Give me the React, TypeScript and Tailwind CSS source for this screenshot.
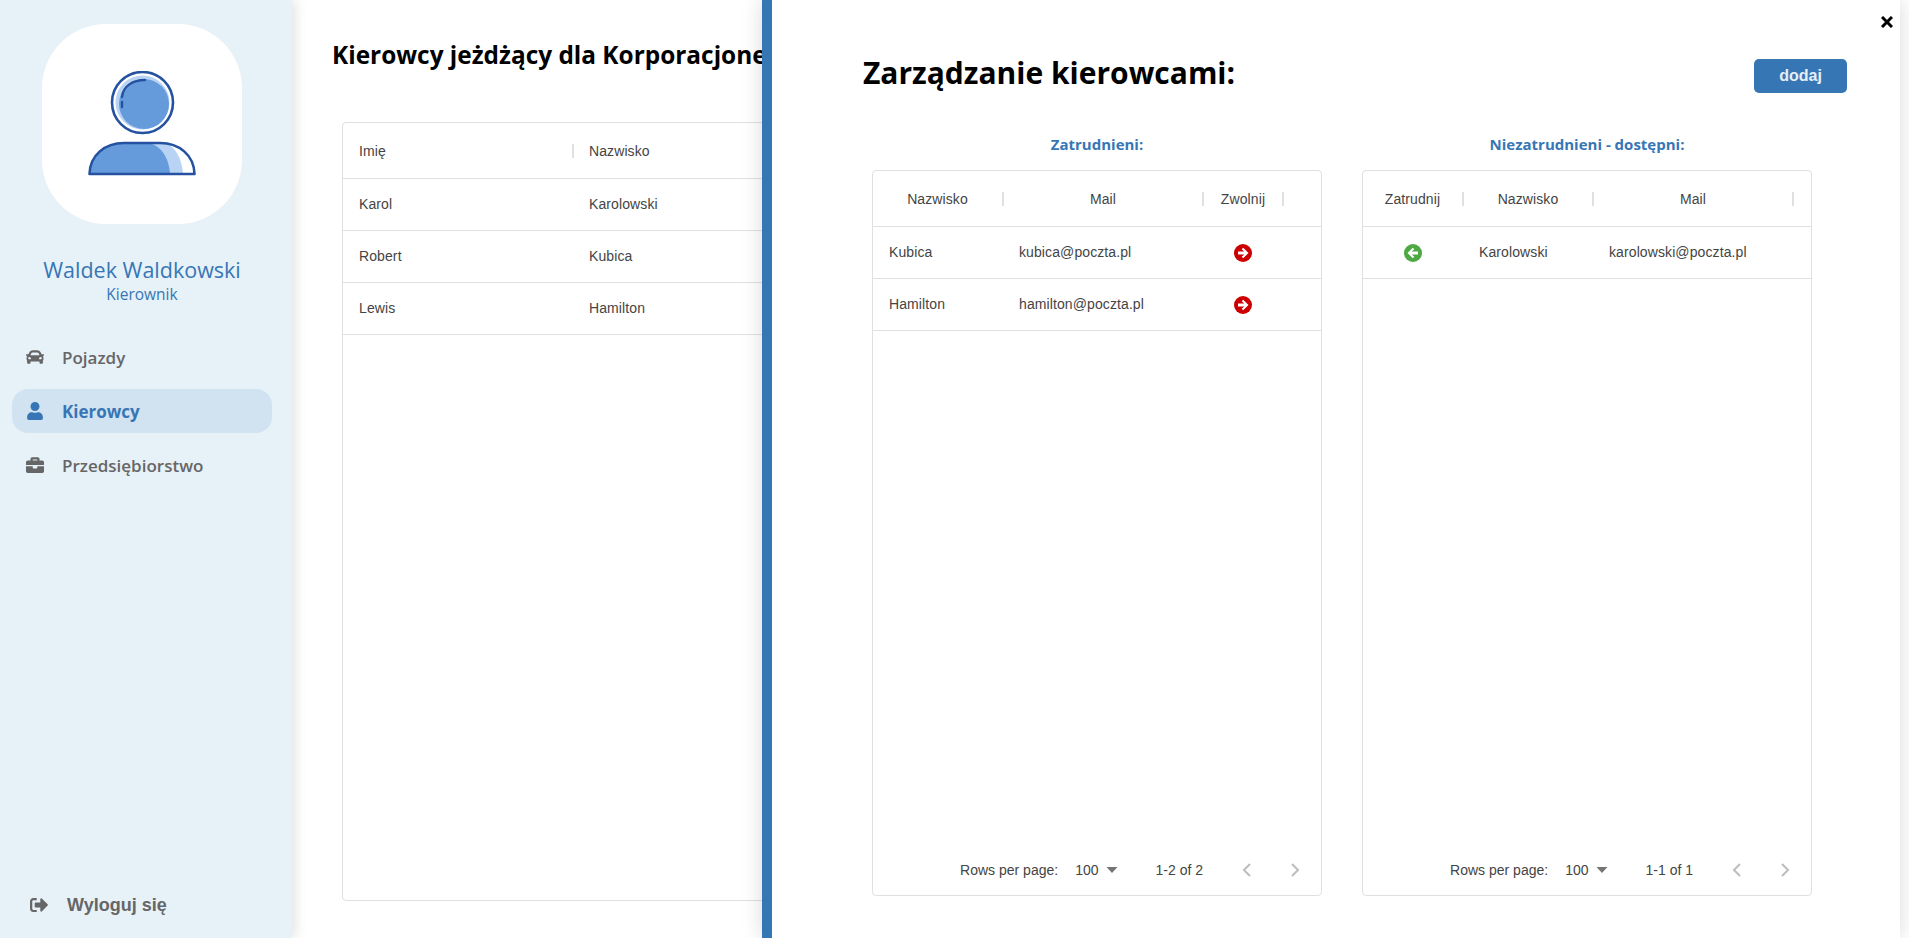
import React from "react";

const seg = "font-['Open_Sans','Noto_Sans',sans-serif]";

function Avatar() {
  return (
    <svg width="108" height="105" viewBox="0 0 108 105" fill="none">
      <circle cx="54.500" cy="31.500" r="30.500" fill="#fff" stroke="#2552a0" strokeWidth="2.600" />
      <circle cx="54.500" cy="31.500" r="27" fill="#b9d3f4" />
      <circle cx="56" cy="33" r="25" fill="#659bdb" />
      <path d="M34 36 V31 M34 26 C35 15 45 9 57 9" stroke="#2552a0" strokeWidth="2.400" strokeLinecap="round" />
      <path d="M1.500 103 C2 84 17 72 36 72 H72 C91 72 106 84 106.500 103 Z" fill="#fff" />
      <path d="M1.500 103 C2 84 17 72 36 72 H77 C88 76 94 88 95 103 Z" fill="#b9d3f4" />
      <path d="M1.500 103 C2 84 17 72 36 72 H60 C73 74 81 87 82 103 Z" fill="#659bdb" />
      <path d="M1.500 103 C2 84 17 72 36 72 H72 C91 72 106 84 106.500 103 Z" stroke="#2552a0" strokeWidth="2.600" strokeLinejoin="round" />
    </svg>
  );
}

function CarIcon() {
  return (
    <svg width="18" height="14" viewBox="0 0 512 384" fill="currentColor">
      <path d="M499.99 112h-59.87l-16.64-41.6C406.38 27.61 365.57 0 319.48 0H192.52c-46.08 0-86.9 27.61-104.01 70.4L71.87 112H12.01C4.2 112-1.53 119.34.37 126.91l6 24C7.7 156.25 12.5 160 18.01 160h20.07C24.65 171.73 16 188.78 16 208v48c0 16.12 6.16 30.67 16 41.93V352c0 17.67 14.33 32 32 32h32c17.67 0 32-14.33 32-32v-32h256v32c0 17.67 14.33 32 32 32h32c17.67 0 32-14.33 32-32v-54.07c9.84-11.25 16-25.8 16-41.93v-48c0-19.22-8.65-36.27-22.07-48h20.07c5.51 0 10.31-3.75 11.64-9.09l6-24c1.89-7.57-3.84-14.91-11.65-14.91zM147.92 94.17C155.21 75.95 172.86 64 192.52 64h126.96c19.66 0 37.31 11.95 44.6 30.17L384 144H128l19.92-49.83zM96 255.88c-19.2 0-32-12.76-32-31.88s12.8-31.88 32-31.88 48 28.69 48 47.81-28.8 15.95-48 15.95zm320 0c-19.2 0-48 3.19-48-15.94s28.8-47.81 48-47.81 32 12.75 32 31.87-12.8 31.88-32 31.88z" />
    </svg>
  );
}

function UserIcon() {
  return (
    <svg width="16" height="18" viewBox="0 0 448 512" fill="currentColor">
      <path d="M224 256c70.7 0 128-57.3 128-128S294.7 0 224 0 96 57.3 96 128s57.3 128 128 128zm89.6 32h-16.7c-22.2 10.2-46.9 16-72.9 16s-50.6-5.8-72.9-16h-16.7C60.2 288 0 348.2 0 422.4V464c0 26.5 21.5 48 48 48h352c26.5 0 48-21.5 48-48v-41.6c0-74.2-60.2-134.4-134.4-134.4z" />
    </svg>
  );
}

function BriefcaseIcon() {
  return (
    <svg width="18" height="16" viewBox="0 0 512 448" fill="currentColor">
      <path d="M320 304c0 8.84-7.16 16-16 16h-96c-8.84 0-16-7.16-16-16v-48H0v144c0 25.6 22.4 48 48 48h416c25.6 0 48-22.4 48-48V256H320v48zM464 96h-80V48c0-25.6-22.4-48-48-48H176c-25.6 0-48 22.4-48 48v48H48C22.4 96 0 118.4 0 144v80h512v-80c0-25.6-22.4-48-48-48zm-144 0H192V64h128v32z" />
    </svg>
  );
}

function SignOutIcon() {
  return (
    <svg width="18" height="14" viewBox="0 0 512 400" fill="currentColor">
      <path d="M502.6 215.6l-168 168c-15 15-41 4.500-41-17v-96h-136c-13.300 0-24-10.700-24-24v-96c0-13.300 10.700-24 24-24h136v-96c0-21.400 25.900-32 41-17l168 168c9.300 9.400 9.300 24.600 0 34zM192 392v-40c0-6.600-5.400-12-12-12H96c-17.700 0-32-14.300-32-32V96c0-17.700 14.300-32 32-32h84c6.600 0 12-5.400 12-12V12c0-6.600-5.400-12-12-12H96C43 0 0 43 0 96v208c0 53 43 96 96 96h84c6.600 0 12-5.400 12-12z" />
    </svg>
  );
}

function ArrowCircle({ dir, color }: { dir: "left" | "right"; color: string }) {
  return (
    <svg width="18" height="18" viewBox="0 0 18 18" className="block">
      <circle cx="9" cy="9" r="9" fill={color} />
      <g transform={dir === "left" ? "rotate(180 9 9)" : undefined}>
        <path d="M9.200 3.700 L14.500 9 L9.200 14.300 L7.700 12.800 L10.300 10.400 H4 V7.600 H10.300 L7.700 5.200 Z" fill="#fff" />
      </g>
    </svg>
  );
}

function NavItem({ icon, label, active }: { icon: React.ReactNode; label: string; active?: boolean }) {
  return (
    <div
      className={`mx-3 flex h-11 w-[260px] items-center rounded-2xl pl-[12px] text-[17px] ${seg} ${
        active ? "bg-[#d1e3f1] font-bold text-[#3776b5]" : "font-semibold text-[#666666]"
      }`}
    >
      <span className="flex w-[22px] justify-center">{icon}</span>
      <span className="ml-[16px] leading-none">{label}</span>
    </div>
  );
}

function Sep() {
  return <span className="h-[14px] w-[2px] shrink-0 bg-[#e0e0e0]" />;
}

function HeadCell({ w, label, sep = true }: { w: number; label: string; sep?: boolean }) {
  return (
    <div className="flex h-full shrink-0 items-center" style={{ width: w }}>
      <span className="flex-1 text-center">{label}</span>
      {sep && <Sep />}
    </div>
  );
}

function Pagination({ range }: { range: string }) {
  return (
    <div className="mt-auto flex h-[52px] items-center justify-end pt-[2px] pr-[20px] text-[14px] tracking-normal text-[#444444]">
      <span>Rows per page:</span>
      <span className="ml-[17px]">100</span>
      <svg className="ml-[7px]" width="12" height="6" viewBox="0 0 12 6" fill="#757575">
        <path d="M0.500 0 H11.500 L6 6 Z" />
      </svg>
      <span className="ml-[38px]">{range}</span>
      <svg className="ml-[38px]" width="12" height="14" viewBox="0 0 12 14" fill="none" stroke="#bdbdbd" strokeWidth="2">
        <path d="M9 1 L3 7 L9 13" />
      </svg>
      <svg className="ml-[36px]" width="12" height="14" viewBox="0 0 12 14" fill="none" stroke="#bdbdbd" strokeWidth="2">
        <path d="M3 1 L9 7 L3 13" />
      </svg>
    </div>
  );
}

const firstRows = [
  ["Karol", "Karolowski"],
  ["Robert", "Kubica"],
  ["Lewis", "Hamilton"],
];

export default function App() {
  return (
    <div className="relative flex h-[938px] w-[1909px] overflow-hidden bg-white font-['Liberation_Sans',sans-serif]">
      <aside className="flex h-full w-[292px] shrink-0 flex-col bg-[#e6f1f8] shadow-[3px_0_12px_rgba(0,0,0,0.12)]">
        <div className="mt-6 ml-[42px] flex h-[200px] w-[200px] items-center justify-center rounded-[64px] bg-white pb-[1px]">
          <Avatar />
        </div>
        <div className={`mt-[32px] ml-[42px] w-[200px] whitespace-nowrap text-center text-[21.5px] leading-7 text-[#3776b5] ${seg}`}>Waldek Waldkowski</div>
        <div className={`ml-[42px] w-[200px] text-center text-[15.5px] leading-5 text-[#3776b5] ${seg}`}>Kierownik</div>
        <nav className="mt-[31px] flex flex-col gap-[10px]">
          <NavItem icon={<CarIcon />} label="Pojazdy" />
          <NavItem icon={<UserIcon />} label="Kierowcy" active />
          <NavItem icon={<BriefcaseIcon />} label="Przedsiębiorstwo" />
        </nav>
        <div className="mt-auto mb-[17px] flex h-8 items-center pl-[30px] text-[18px] font-bold text-[#666666]">
          <SignOutIcon />
          <span className="ml-[19px]">Wyloguj się</span>
        </div>
      </aside>

      <main className="min-w-0 flex-1 pl-[40px]">
        <h1 className={`mt-[37px] h-[36px] whitespace-nowrap text-[24.4px] font-bold leading-9 text-black ${seg}`}>
          Kierowcy jeżdżący dla Korporacjonex
        </h1>
        <div className="mt-[49px] ml-[10px] flex h-[779px] w-[900px] flex-col rounded-[4px] border border-[#e0e0e0] text-[14px] tracking-[0.1px] text-[#444444]">
          <div className="flex h-[56px] items-center border-b border-[#e0e0e0] pt-px">
            <div className="flex w-[231px] items-center justify-between pl-4">
              <span>Imię</span>
              <Sep />
            </div>
            <span className="pl-[15px]">Nazwisko</span>
          </div>
          {firstRows.map(([a, b]) => (
            <div key={a} className="flex h-[52px] items-center border-b border-[#e0e0e0]">
              <span className="w-[230px] pl-4">{a}</span>
              <span className="pl-[16px]">{b}</span>
            </div>
          ))}
        </div>
      </main>

      <section className="absolute top-0 bottom-0 left-[762px] flex w-[1138px] flex-col border-l-[10px] border-[#3776b5] bg-white pl-[91px] pr-[53px] shadow-[0_0_20px_rgba(0,0,0,0.15)]">
        <div className="absolute top-[16px] right-[7px] text-black">
          <svg width="12" height="12" viewBox="0 0 12 12" stroke="#000" strokeWidth="3" className="block">
            <path d="M1 1 L11 11 M11 1 L1 11" />
          </svg>
        </div>
        <div className="mt-[58px] flex items-start justify-between">
          <h2 className={`text-[30px] leading-[30px] font-bold text-black ${seg}`}>Zarządzanie kierowcami:</h2>
          <button className="mt-px h-[34px] w-[93px] rounded-[5px] bg-[#3776b5] text-[16px] font-bold text-[#e6eef6]">dodaj</button>
        </div>
        <div className="mt-[30px] flex gap-[40px] pl-[9px] pr-[28px]">
          <div className="flex w-[450px] flex-col">
            <div className={`h-[47px] pt-[11px] text-center text-[15px] leading-5 font-bold text-[#3776b5] ${seg}`}>Zatrudnieni:</div>
            <div className="flex h-[726px] flex-col rounded-[4px] border border-[#e0e0e0] text-[14px] tracking-[0.1px] text-[#444444]">
              <div className="flex h-[56px] shrink-0 items-center border-b border-[#e0e0e0] pt-px">
                <HeadCell w={131} label="Nazwisko" />
                <HeadCell w={200} label="Mail" />
                <HeadCell w={80} label="Zwolnij" />
              </div>
              {[["Kubica", "kubica@poczta.pl"], ["Hamilton", "hamilton@poczta.pl"]].map(([a, b]) => (
                <div key={a} className="flex h-[52px] shrink-0 items-center border-b border-[#e0e0e0]">
                  <span className="w-[130px] pl-4">{a}</span>
                  <span className="w-[200px] pl-4">{b}</span>
                  <span className="flex w-[80px] justify-center"><ArrowCircle dir="right" color="#cc0000" /></span>
                </div>
              ))}
              <Pagination range="1-2 of 2" />
            </div>
          </div>
          <div className="flex w-[450px] flex-col">
            <div className={`h-[47px] pt-[11px] text-center text-[15px] leading-5 font-bold text-[#3776b5] ${seg}`}>Niezatrudnieni - dostępni:</div>
            <div className="flex h-[726px] flex-col rounded-[4px] border border-[#e0e0e0] text-[14px] tracking-[0.1px] text-[#444444]">
              <div className="flex h-[56px] shrink-0 items-center border-b border-[#e0e0e0] pt-px">
                <HeadCell w={101} label="Zatrudnij" />
                <HeadCell w={130} label="Nazwisko" />
                <HeadCell w={200} label="Mail" />
              </div>
              <div className="flex h-[52px] shrink-0 items-center border-b border-[#e0e0e0]">
                <span className="flex w-[100px] justify-center"><ArrowCircle dir="left" color="#4ea843" /></span>
                <span className="w-[130px] pl-[16px]">Karolowski</span>
                <span className="w-[200px] whitespace-nowrap pl-4">karolowski@poczta.pl</span>
              </div>
              <Pagination range="1-1 of 1" />
            </div>
          </div>
        </div>
      </section>
    </div>
  );
}
